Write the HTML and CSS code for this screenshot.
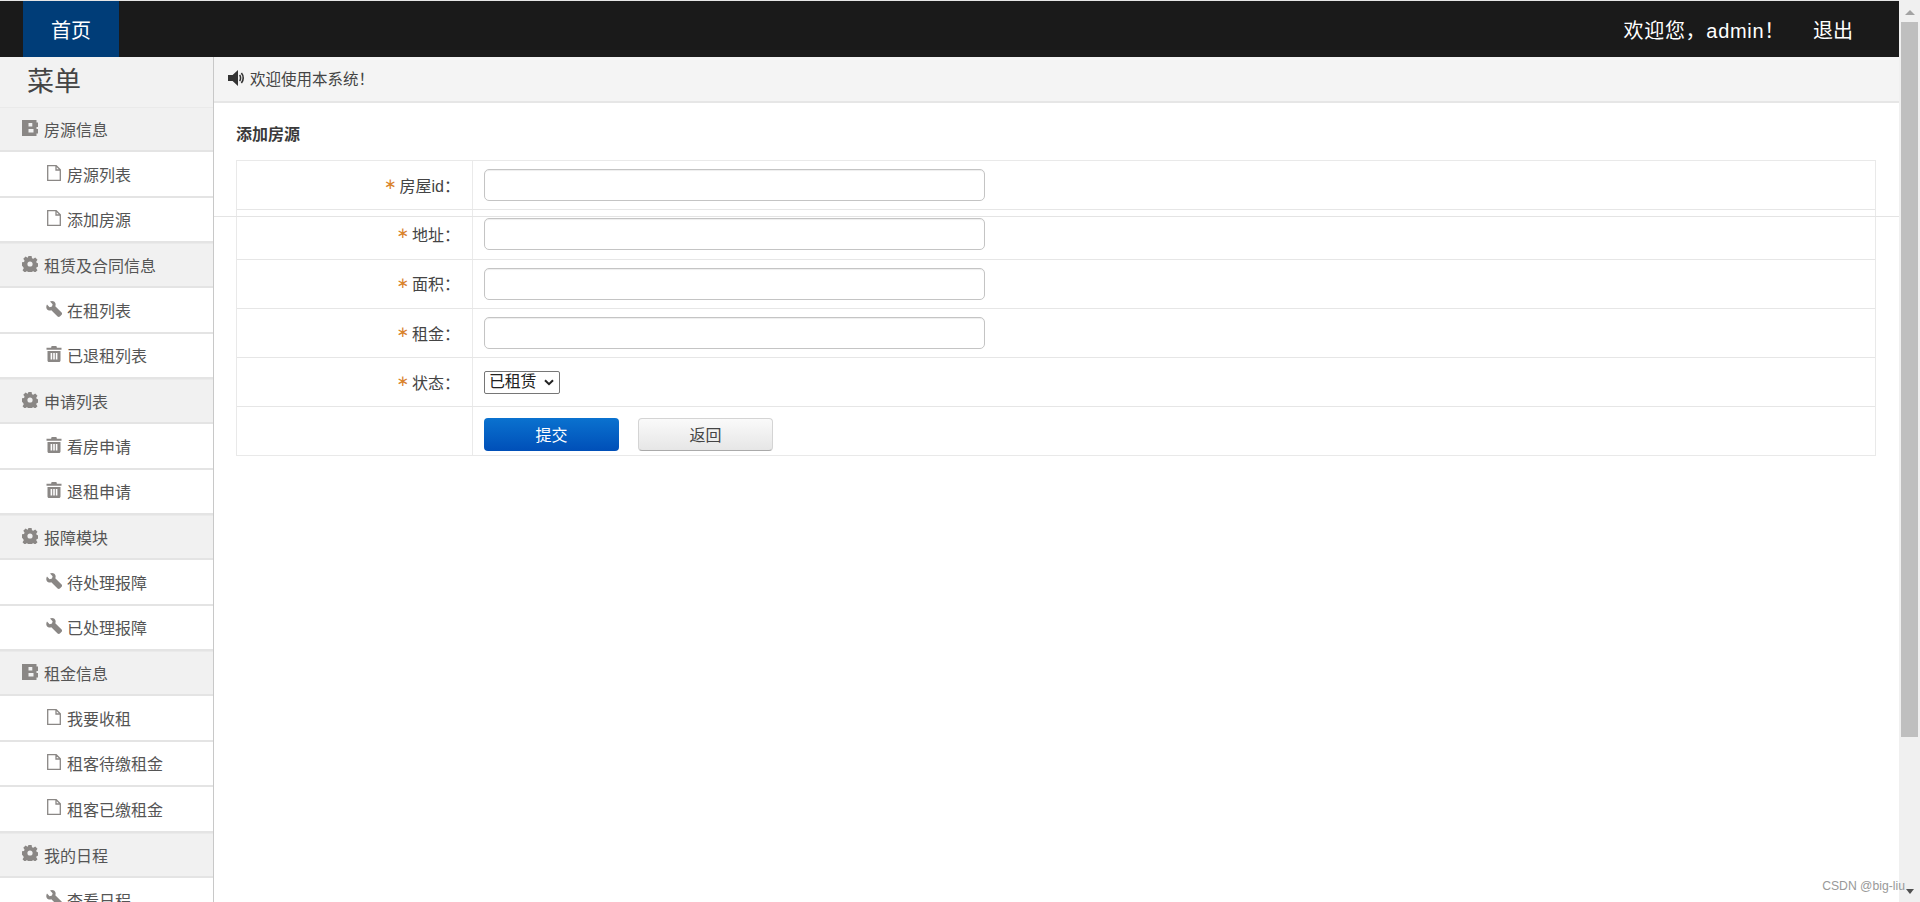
FILE: index.html
```html
<!DOCTYPE html>
<html lang="zh">
<head>
<meta charset="utf-8">
<title>添加房源</title>
<link rel="stylesheet" href="styles.css">
</head>
<body>
<svg class="defs" aria-hidden="true">
  <symbol id="i-book" viewBox="0 0 16 16"><path fill-rule="evenodd" d="M0 0h14.500v2.500H16v4.500h-1.500V9H16v4.500h-1.500V16H0zM6.500 3v3.500h3.800V3zM6.500 9v3.500h5V9z"/></symbol>
  <symbol id="i-gear" viewBox="0 0 16 16"><path fill-rule="evenodd" d="M6.400 0h3.200l.4 2.200 1.300.6 1.900-1.300 2.300 2.300-1.300 1.900.6 1.300 2.200.4v3.200l-2.200.4-.6 1.300 1.300 1.900-2.300 2.300-1.900-1.300-1.300.6-.4 2.200H6.400l-.4-2.200-1.300-.6-1.900 1.300-2.300-2.300 1.300-1.900-.6-1.300L-.2 9.600V6.400L2 6l.6-1.300-1.300-1.900 2.300-2.300 1.900 1.300L6 1.200zM8 5.400a2.600 2.600 0 1 0 0 5.200 2.600 2.600 0 0 0 0-5.200z"/></symbol>
  <symbol id="i-file" viewBox="0 0 16 16"><path fill="none" stroke="currentColor" stroke-width="1.300" d="M1.700.7h8.500l4.100 4.100v10.500H1.700zM10 .7v4.300h4.300"/></symbol>
  <symbol id="i-wrench" viewBox="0 0 16 16"><path d="M1 3.600 3.600 6.200 6 5.600 6.600 3.200 4 .6C6-.5 8.600.2 9.400 2.200c.4 1.100.3 2-.1 3L15.600 11.500c.6.600.6 1.600 0 2.300l-1.700 1.700c-.7.600-1.700.6-2.300 0L5.300 9.200c-1 .4-2 .5-3 .1C.300 8.500-.4 5.800 1 3.600z"/></symbol>
  <symbol id="i-trash" viewBox="0 0 16 16"><path fill-rule="evenodd" d="M5.600 0h4.800l.5 1.700H15.500v2.100H.5V1.700h4.600zM1.500 5h13v9.500c0 .9-.6 1.500-1.500 1.500H3c-.9 0-1.500-.6-1.500-1.500zM4.600 7v6.500h1.600V7zM7.200 7v6.500h1.600V7zM9.800 7v6.500h1.600V7z"/></symbol>
  <symbol id="i-sound" viewBox="0 0 16 16"><path d="M10 0v16L4.600 11H0V5h4.600z"/><path fill="none" stroke="currentColor" stroke-width="1.600" d="M11.600 5c1.300 1.400 1.300 4.600 0 6M13.400 3c2.400 2.800 2.400 7.200 0 10"/></symbol>
  <symbol id="i-chevron" viewBox="0 0 10 7"><path fill="none" stroke="currentColor" stroke-width="2" d="M1 1.200 5 5.200 9 1.200"/></symbol>
</svg>

<header class="topbar">
  <a class="home">首页</a>
  <div class="top-right">
    <span class="welcome">欢迎您，admin！</span>
    <span class="logout">退出</span>
  </div>
</header>

<div class="shell">
  <aside class="side">
    <div class="side-title">菜单</div>
    <div class="row group"><svg class="ic"><use href="#i-book"/></svg>房源信息</div>
    <div class="row item"><svg class="ic"><use href="#i-file"/></svg>房源列表</div>
    <div class="row item"><svg class="ic"><use href="#i-file"/></svg>添加房源</div>
    <div class="row group"><svg class="ic"><use href="#i-gear"/></svg>租赁及合同信息</div>
    <div class="row item"><svg class="ic"><use href="#i-wrench"/></svg>在租列表</div>
    <div class="row item"><svg class="ic"><use href="#i-trash"/></svg>已退租列表</div>
    <div class="row group"><svg class="ic"><use href="#i-gear"/></svg>申请列表</div>
    <div class="row item"><svg class="ic"><use href="#i-trash"/></svg>看房申请</div>
    <div class="row item"><svg class="ic"><use href="#i-trash"/></svg>退租申请</div>
    <div class="row group"><svg class="ic"><use href="#i-gear"/></svg>报障模块</div>
    <div class="row item"><svg class="ic"><use href="#i-wrench"/></svg>待处理报障</div>
    <div class="row item"><svg class="ic"><use href="#i-wrench"/></svg>已处理报障</div>
    <div class="row group"><svg class="ic"><use href="#i-book"/></svg>租金信息</div>
    <div class="row item"><svg class="ic"><use href="#i-file"/></svg>我要收租</div>
    <div class="row item"><svg class="ic"><use href="#i-file"/></svg>租客待缴租金</div>
    <div class="row item"><svg class="ic"><use href="#i-file"/></svg>租客已缴租金</div>
    <div class="row group"><svg class="ic"><use href="#i-gear"/></svg>我的日程</div>
    <div class="row item"><svg class="ic"><use href="#i-wrench"/></svg>查看日程</div>
  </aside>

  <main class="main">
    <div class="notice"><svg class="ic-sound"><use href="#i-sound"/></svg>欢迎使用本系统！</div>
    <div class="stray-line"></div>
    <section class="panel">
      <h2 class="panel-title">添加房源</h2>
      <div class="form">
        <div class="f-row"><label class="f-label"><i>∗</i>房屋id：</label><div class="f-field"><input class="txt" type="text"></div></div>
        <div class="f-row"><label class="f-label"><i>∗</i>地址：</label><div class="f-field"><input class="txt" type="text"></div></div>
        <div class="f-row"><label class="f-label"><i>∗</i>面积：</label><div class="f-field"><input class="txt" type="text"></div></div>
        <div class="f-row"><label class="f-label"><i>∗</i>租金：</label><div class="f-field"><input class="txt" type="text"></div></div>
        <div class="f-row"><label class="f-label"><i>∗</i>状态：</label><div class="f-field"><div class="sel-wrap"><select class="sel"><option>已租赁</option></select><svg class="sel-arrow"><use href="#i-chevron"/></svg></div></div></div>
        <div class="f-row last"><div class="f-label"></div><div class="f-field btns"><button class="btn primary" type="button">提交</button><button class="btn ghost" type="button">返回</button></div></div>
      </div>
    </section>
  </main>

  <div class="scrollbar">
    <div class="arrow up"></div>
    <div class="thumb"></div>
    <div class="arrow down"></div>
  </div>
</div>
<div class="mark">CSDN @big-liu</div>
</body>
</html>
```

FILE: styles.css
```css
* { box-sizing: border-box; }
html, body { margin: 0; height: 100%; overflow: hidden; background: #fff; }
body { font-family: "Liberation Sans", "Noto Sans CJK SC", sans-serif; font-size: 16px; color: #444; position: relative; }
.defs { position: absolute; width: 0; height: 0; }

.topbar { height: 57px; border-top: 1px solid #e6e6e6; background: #1a1a1a; display: flex; justify-content: space-between; margin-right: 21px; color: #fff; font-size: 20px; }
.home { margin-left: 23px; width: 96px; background: #003d78; display: flex; align-items: center; justify-content: center; }
.top-right { display: flex; align-items: center; gap: 28px; padding-right: 46px; }
.welcome { letter-spacing: .7px; }

.shell { display: flex; height: 845px; }
.side { width: 214px; flex: none; border-right: 1px solid #c8c8c8; overflow: hidden; }
.side-title { height: 50px; background: #f2f2f2; font-size: 27px; padding-left: 27px; line-height: 50px; color: #444; }
.row { height: 45.35px; border-bottom: 2px solid #e4e4e4; display: flex; align-items: center; color: #555; }
.group { background: #f1f1f1; padding-left: 22px; border-top: 1px solid #eaeaea; }
.group .ic { margin-right: 6px; }
.item { background: #fff; padding-left: 46px; }
.ic { width: 16px; height: 16px; margin-right: 5px; fill: #8a8785; color: #8a8785; flex: none; margin-top: -3px; }

.main { flex: 1; position: relative; min-width: 0; }
.notice { height: 46px; background: #f4f4f4; border-bottom: 2px solid #e6e6e6; display: flex; align-items: center; padding: 0 0 2px 14px; font-size: 15.5px; color: #444; }
.ic-sound { width: 16px; height: 16px; margin-right: 6px; fill: #333; color: #333; }
.stray-line { position: absolute; left: 0; right: 0; top: 159px; height: 1px; background: #e4e4e4; }
.panel { padding: 0 23px 0 22px; }
.panel-title { margin: 0; height: 57px; padding-top: 19px; font-size: 16px; line-height: 26px; font-weight: 700; color: #3a3a3a; }
.form { border: 1px solid #e9e9e9; }
.f-row { display: flex; height: 49.3px; border-bottom: 1px solid #e6e6e6; }
.f-row.last { border-bottom: 0; height: 47.5px; }
.f-label { width: 236px; flex: none; border-right: 1px solid #eaeaea; display: flex; align-items: center; justify-content: flex-end; padding: 0 12px 1px 0; color: #444; }
.f-label i { color: #d9822b; font-style: normal; font-size: 15px; line-height: 1; margin-right: 3px; font-family: "DejaVu Sans", sans-serif; }
.f-field { flex: 1; display: flex; align-items: center; padding-left: 11px; }
.txt { width: 501px; height: 32px; border: 1px solid #c4c4c4; border-radius: 5px; background: #fff; box-shadow: inset 0 1px 1px #eee; outline: 0; }
.sel-wrap { position: relative; width: 76px; height: 23px; }
.sel { appearance: none; display: block; width: 76px; height: 23px; border: 1px solid #767676; border-radius: 2px; background: #fff; font: 16px/19px "Liberation Sans", "Noto Sans CJK SC", sans-serif; color: #222; padding: 0 0 2px 4px; letter-spacing: -.3px; outline: 0; }
.sel-arrow { position: absolute; right: 6px; top: 8px; width: 10px; height: 7px; color: #222; pointer-events: none; }
.btns { gap: 19px; align-items: flex-start; padding-top: 10.5px; }
.btn { width: 135px; height: 33px; border-radius: 4px; font: 16px "Liberation Sans", "Noto Sans CJK SC", sans-serif; padding: 0; }
.primary { background: linear-gradient(#0a72cf, #004fb8); border: 0; color: #fff; }
.ghost { background: linear-gradient(#fafafa, #e6e6e6); border: 1px solid #d4d4d4; border-bottom-color: #aaa; color: #444; }

.scrollbar { width: 21px; flex: none; background: #f0f0f0; margin-top: -57px; height: 902px; display: flex; flex-direction: column; align-items: center; }
.arrow { width: 0; height: 0; flex: none; border-style: solid; border-color: transparent; }
.arrow.up { margin-top: 10px; border-width: 0 5px 5px; border-bottom-color: #a3a3a3; }
.thumb { width: 17px; height: 715px; margin-top: 7px; background: #bfbfbf; }
.arrow.down { margin-top: 152px; border-width: 5px 4.5px 0; border-top-color: #505050; }
.mark { position: absolute; right: 15px; bottom: 9px; font: 12.2px "Liberation Sans", sans-serif; color: #999; white-space: nowrap; }
```
